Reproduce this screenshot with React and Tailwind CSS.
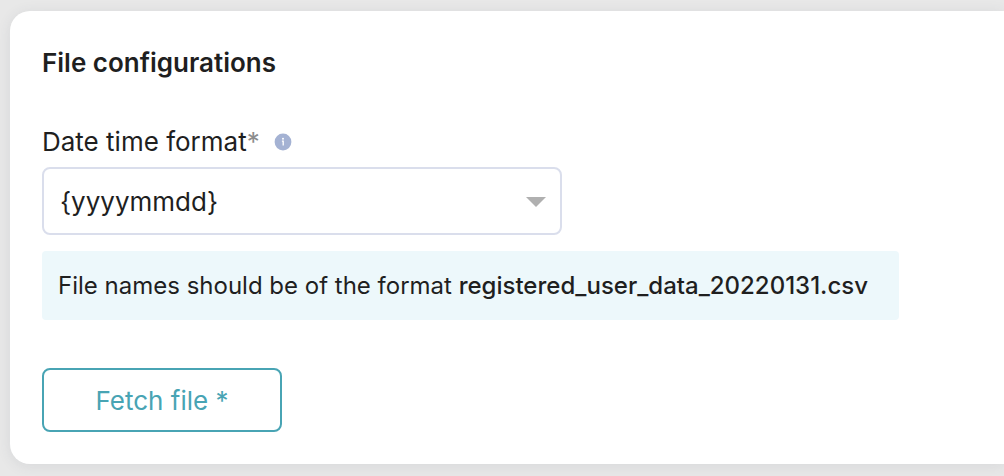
import { useState } from "react";

const FORMATS = ["{yyyymmdd}", "{ddmmyyyy}", "{mmddyyyy}"];

function InfoIcon() {
  return (
    <svg viewBox="0 0 18 18" className="size-[18px]" aria-hidden="true">
      <circle cx="9" cy="9" r="8.4" fill="#a4b2d3" />
      <circle cx="9" cy="5.7" r="1" fill="#fff" />
      <path d="M7.9 8.1h1.3v4.5" fill="none" stroke="#fff" strokeWidth="1.3" />
    </svg>
  );
}

export default function App() {
  const [format, setFormat] = useState(FORMATS[0]);

  return (
    <div className="bg-[#e8e8e8] pl-2.5 pt-[11px] pb-3 font-['Inter',sans-serif] text-[#1f1f1f]">
      <div className="rounded-l-[20px] bg-white px-8 pt-8 pb-8 shadow-[0_2px_14px_rgba(60,70,90,0.1)]">

        {/* TITLE */}
        <h1 className="text-[26px] leading-10 font-semibold">File configurations</h1>

        {/* DATE FORMAT */}
        <div className="mt-10 flex items-center gap-3.5 text-[26px] leading-[37px]">
          <label htmlFor="format">
            Date time format<span className="text-[#8c8c8c]">*</span>
          </label>
          <InfoIcon />
        </div>

        <div className="relative mt-[7px] max-w-[520px]">
          <select
            id="format"
            value={format}
            onChange={(e) => setFormat(e.target.value)}
            className="h-17 w-full appearance-none rounded-lg border-2 border-[#dadeec] bg-white pr-12 pl-4 text-[26px]"
          >
            {FORMATS.map((item) => (
              <option key={item} value={item}>{item}</option>
            ))}
          </select>
          <svg
            viewBox="0 0 20 10"
            className="pointer-events-none absolute top-[30px] right-4 h-2.5 w-5"
            aria-hidden="true"
          >
            <path d="M0 0h20L10 10z" fill="#b0b0b0" />
          </svg>
        </div>

        {/* HINT */}
        <p className="mt-4 max-w-[857px] rounded bg-[#edf8fb] px-4 py-4 text-2xl leading-[37px]">
          File names should be of the format{" "}
          <span className="font-medium">registered_user_data_20220131.csv</span>
        </p>

        {/* BUTTON */}
        <button
          type="button"
          className="mt-12 h-16 w-60 rounded-lg border-2 border-[#48a4b4] text-[26px] text-[#48a4b4]"
        >
          Fetch file *
        </button>
      </div>
    </div>
  );
}
